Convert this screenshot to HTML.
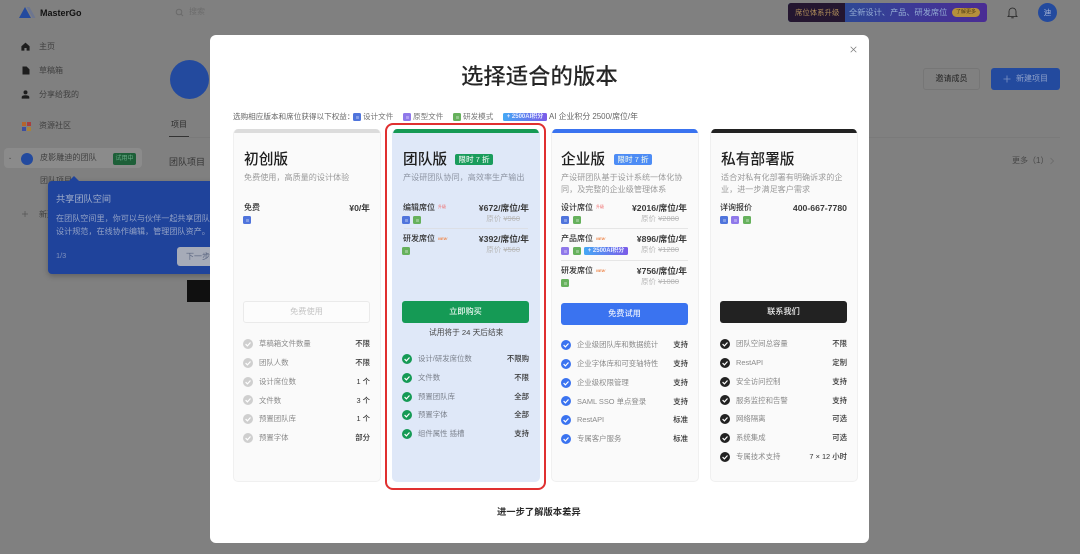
<!DOCTYPE html>
<html lang="zh-CN"><head><meta charset="utf-8"><title>MasterGo</title>
<style>
*{box-sizing:border-box;margin:0;padding:0}
html,body{width:1080px;height:554px;overflow:hidden;background:#808080}
body{position:relative;font-family:"Liberation Sans","Noto Sans CJK SC",sans-serif}
#bgfill{position:absolute;left:0;top:0;width:1080px;height:554px;background:#808080}
.a{position:absolute}
.t{position:absolute;white-space:nowrap;line-height:12px;height:12px;font-size:8px}
.r{text-align:right}
.b{font-weight:700}
.i{position:absolute;width:8px;height:8px;border-radius:1.5px}
.d{background:#4f74dc}.p{background:#8f78ea}.g{background:#66b15c}
.i:after{content:"";position:absolute;left:2.5px;top:2.5px;width:3px;height:3px;background:rgba(255,255,255,.3);border-radius:.5px}
.bd{position:absolute;height:8px;border-radius:1.5px;background:linear-gradient(90deg,#45a8f5,#7b5be8);color:#e8ecff;font-size:6px;line-height:8px;font-weight:700;text-align:center;white-space:nowrap;overflow:hidden}
.card{position:absolute;top:129px;width:148px;height:353px;background:#fafafa;border:1px solid #f0f0f0;border-top:0;border-radius:5px;overflow:hidden}
.card:before{content:"";position:absolute;left:-1px;right:-1px;top:0;height:4px;background:var(--c)}
.h{position:absolute;font-size:14.7px;line-height:18px;height:18px;font-weight:500;color:#1e1e1e;white-space:nowrap;top:151px}
.s{color:#9a9a9a;font-size:8.1px}
.lab{font-weight:500;color:#303030;font-size:8px}
.pr{font-weight:700;color:#3a3a3a;font-size:8.7px;text-align:right}
.og{color:#b8b8b8;font-size:7.5px;text-align:right}
.og s{text-decoration:line-through}
.hr{position:absolute;height:1px;background:#dcdfe6}
.up{position:absolute;font-size:4px;line-height:5px;color:#ef6a6a;white-space:nowrap}
.nw{position:absolute;font-size:4px;line-height:5px;color:#ef8a50;font-style:italic;font-weight:700;white-space:nowrap}
.btn{position:absolute;border-radius:3px;text-align:center;font-size:8.2px;font-weight:500;line-height:22px;height:22px;width:127px}
.f{color:#8a8a8a;font-size:7.4px}
.v{color:#333;font-weight:500;font-size:7.4px;text-align:right}
.ck{position:absolute;width:10px;height:10px}
.tag{position:absolute;top:154px;height:11px;width:38px;border-radius:2px;color:#e8f3ee;font-size:7.6px;line-height:11px;text-align:center;font-weight:500;white-space:nowrap}
.bg{color:#2c2c2c;font-size:8px}
.bg2{color:#3f3f3f;font-size:8px}
</style></head><body>
<div id="bgfill"></div>
<svg width="0" height="0" style="position:absolute"><defs>
<symbol id="c" viewBox="0 0 10 10"><circle cx="5" cy="5" r="5" fill="currentColor"/><path d="M2.6 5.1 4.4 6.9 7.5 3.5" fill="none" stroke="#fff" stroke-width="1.2"/></symbol>
</defs></svg>

<!-- dimmed app -->
<svg class="a" style="left:18px;top:6px" width="20" height="13" viewBox="0 0 20 13"><path d="M1 12 7 1 13 12Z" fill="#234a9e"/><path d="M8.5 1h3l6 11h-3Z" fill="#6d7690"/></svg>
<div class="t b" style="left:40px;top:7px;font-size:9px;color:#111">MasterGo</div>
<svg class="a" style="left:175px;top:8px" width="9" height="9" viewBox="0 0 9 9"><circle cx="4" cy="4" r="2.8" fill="none" stroke="#6a6a6a"/><path d="M6 6l2 2" stroke="#6a6a6a"/></svg>
<div class="t" style="left:189px;top:6px;color:#6c6c6c">搜索</div>

<div class="a" style="left:788px;top:3px;width:199px;height:19px;border-radius:3px;background:linear-gradient(90deg,#205493,#3b3a96 60%,#4a2c94);overflow:hidden"><div class="a" style="left:0;top:0;width:57px;height:19px;background:#241630"></div></div>
<div class="t" style="left:795px;top:6.5px;color:#b08e5a;font-size:7.4px">席位体系升级</div>
<div class="t" style="left:849px;top:6.5px;color:#93abd3;font-size:8.2px">全新设计、产品、研发席位</div>
<div class="a" style="left:952px;top:8px;width:28px;height:9px;border-radius:5px;background:#b5903c;color:#4c3a14;font-size:5px;line-height:9px;text-align:center;white-space:nowrap">了解更多</div>
<svg class="a" style="left:1007px;top:6px" width="11" height="13" viewBox="0 0 11 13"><path d="M2 9.5V5.5a3.5 3.5 0 0 1 7 0v4l1 1H1Z M4.3 11.8h2.4" fill="none" stroke="#222" stroke-width=".8"/></svg>
<div class="a" style="left:1038px;top:3px;width:19px;height:19px;border-radius:50%;background:#234a9e;color:#a9b6d6;font-size:7.5px;line-height:19px;text-align:center">迪</div>

<svg class="a" style="left:21px;top:42px" width="9" height="9" viewBox="0 0 9 9"><path d="M4.5.6 8.6 4.3V8.6H5.6V6H3.4V8.6H.4V4.3Z" fill="#1d1d1d"/></svg>
<div class="t bg2" style="left:39px;top:41px">主页</div>
<svg class="a" style="left:22px;top:66px" width="8" height="9" viewBox="0 0 8 9"><path d="M.5.5H4.6L7.5 3.4V8.5H.5Z" fill="#1d1d1d"/></svg>
<div class="t bg2" style="left:39px;top:65px">草稿箱</div>
<svg class="a" style="left:21px;top:90px" width="9" height="9" viewBox="0 0 9 9"><circle cx="4.5" cy="2.4" r="2" fill="#1d1d1d"/><path d="M.7 8.6V7C.7 5.7 2.6 5.2 4.5 5.2S8.3 5.7 8.3 7V8.6Z" fill="#1d1d1d"/></svg>
<div class="t bg2" style="left:39px;top:88.5px">分享给我的</div>
<div class="a" style="left:22px;top:122px;width:4px;height:4px;background:#b5652c"></div><div class="a" style="left:26.5px;top:122px;width:4px;height:4px;background:#a83f3f"></div><div class="a" style="left:22px;top:127px;width:4px;height:4px;background:#3d4fa0"></div><div class="a" style="left:26.5px;top:127px;width:4px;height:4px;background:#a8823c"></div>
<div class="t bg2" style="left:39px;top:120px">资源社区</div>
<div class="a" style="left:4px;top:148px;width:138px;height:20px;border-radius:4px;background:#8b8b8b"></div>
<div class="t" style="left:8px;top:152px;font-size:5px;color:#444">⌄</div>
<div class="a" style="left:21px;top:152.5px;width:12px;height:12px;border-radius:50%;background:#234a9e"></div>
<div class="t bg2" style="left:40px;top:152px;font-size:8.1px">皮影雕迪的团队</div>
<div class="a" style="left:113px;top:153px;width:23px;height:12px;border-radius:2px;background:#1d5f38;color:#6cae8a;font-size:6px;line-height:12px;text-align:center">试用中</div>
<div class="t bg2" style="left:40px;top:175px">团队项目</div>
<svg class="a" style="left:21px;top:210px" width="8" height="8" viewBox="0 0 8 8"><path d="M4 1v6M1 4h6" stroke="#555" stroke-width=".7"/></svg>
<div class="t bg2" style="left:39px;top:209px">新建</div>

<div class="a" style="left:48px;top:181px;width:170px;height:93px;border-radius:4px;background:#1f439b;box-shadow:0 2px 6px rgba(0,0,0,.25)"></div>
<div class="a" style="left:68px;top:176px;border-left:6px solid transparent;border-right:6px solid transparent;border-bottom:6px solid #1f439b"></div>
<div class="t" style="left:56px;top:193px;font-size:9.2px;color:#a0adca">共享团队空间</div>
<div class="t" style="left:56px;top:213px;font-size:8.1px;color:#93a2c6">在团队空间里，你可以与伙伴一起共享团队</div>
<div class="t" style="left:56px;top:225.5px;font-size:8.1px;color:#93a2c6">设计规范，在线协作编辑，管理团队资产。</div>
<div class="t" style="left:56px;top:250px;font-size:7.4px;color:#8092bd">1/3</div>
<div class="a" style="left:177px;top:247px;width:40px;height:19px;border-radius:3px;background:#a6abb8"></div>
<div class="t" style="left:186px;top:250.5px;color:#5a6580">下一步</div>
<div class="a" style="left:187px;top:280px;width:30px;height:22px;background:#101010"></div>

<div class="a" style="left:169.5px;top:59.5px;width:39px;height:39px;border-radius:50%;background:#234a9e"></div>
<div class="t bg" style="left:171px;top:119px">项目</div>
<div class="a" style="left:169px;top:136px;width:20px;height:1px;background:#333"></div>
<div class="a" style="left:189px;top:137px;width:871px;height:1px;background:#7a7a7a"></div>
<div class="t" style="left:169px;top:156px;font-size:9px;color:#333">团队项目</div>
<div class="a" style="left:923px;top:68px;width:57px;height:22px;border:1px solid #767676;border-radius:3px;color:#222;font-size:8px;line-height:20px;text-align:center">邀请成员</div>
<div class="a" style="left:991px;top:68px;width:69px;height:22px;border-radius:3px;background:#234a9e"></div>
<svg class="a" style="left:1003px;top:75px" width="8" height="8" viewBox="0 0 8 8"><path d="M4 .5v7M.5 4h7" stroke="#7e93c4" stroke-width=".8"/></svg>
<div class="t" style="left:1016px;top:73px;color:#8ea0c9">新建项目</div>
<div class="t" style="left:1012px;top:155px;color:#474747">更多（1）</div>
<svg class="a" style="left:1049px;top:157px" width="6" height="8" viewBox="0 0 6 8"><path d="M1.5 1 4.5 4 1.5 7" fill="none" stroke="#6a6a6a" stroke-width=".8"/></svg>

<!-- modal -->
<div class="a" style="left:210px;top:35px;width:659px;height:508px;border-radius:6px;background:#fff"></div>
<svg class="a" style="left:850px;top:46px" width="7" height="7" viewBox="0 0 7 7"><path d="M.7.7l5.6 5.6M6.3.7.7 6.3" stroke="#777" stroke-width=".7"/></svg>
<div class="t" style="left:461px;top:63px;height:28px;line-height:28px;font-size:22.4px;font-weight:500;color:#262626">选择适合的版本</div>

<div class="t" style="left:233px;top:111px;font-size:7.6px;color:#666">选购相应版本和席位获得以下权益：</div>
<div class="i d" style="left:353px;top:113px"></div><div class="t" style="left:363px;top:111px;font-size:7.6px;color:#777">设计文件</div>
<div class="i p" style="left:403px;top:113px"></div><div class="t" style="left:413px;top:111px;font-size:7.6px;color:#777">原型文件</div>
<div class="i g" style="left:453px;top:113px"></div><div class="t" style="left:463px;top:111px;font-size:7.6px;color:#777">研发模式</div>
<div class="bd" style="left:503px;top:113px;width:44px">+ 2500AI积分</div>
<div class="t" style="left:549px;top:111px;font-size:7.9px;color:#666">AI 企业积分 2500/席位/年</div>

<div class="card" style="left:233px;--c:#dcdcdc"></div>
<div class="card" style="left:392px;--c:#159a55;background:#dfe8f8;border-color:#dfe8f8"></div>
<div class="card" style="left:551px;--c:#3a73f0"></div>
<div class="card" style="left:710px;--c:#222"></div>

<!-- card 1 -->
<div class="h" style="left:244px">初创版</div>
<div class="t s" style="left:244px;top:171.5px">免费使用，高质量的设计体验</div>
<div class="t lab" style="left:244px;top:202px">免费</div>
<div class="t pr" style="right:710px;top:202px">¥0/年</div>
<div class="i d" style="left:243px;top:216px"></div>
<div class="btn" style="left:243px;top:301px;background:#fcfcfc;border:1px solid #eaeaea;color:#c4c4c4;line-height:20px;font-weight:400">免费使用</div>
<svg class="ck" style="left:243px;top:339px;color:#cfcfcf"><use href="#c"/></svg><div class="t f" style="left:259px;top:338px">草稿箱文件数量</div><div class="t v" style="right:710px;top:338px">不限</div>
<svg class="ck" style="left:243px;top:358px;color:#cfcfcf"><use href="#c"/></svg><div class="t f" style="left:259px;top:357px">团队人数</div><div class="t v" style="right:710px;top:357px">不限</div>
<svg class="ck" style="left:243px;top:377px;color:#cfcfcf"><use href="#c"/></svg><div class="t f" style="left:259px;top:376px">设计席位数</div><div class="t v" style="right:710px;top:376px">1 个</div>
<svg class="ck" style="left:243px;top:395px;color:#cfcfcf"><use href="#c"/></svg><div class="t f" style="left:259px;top:394.5px">文件数</div><div class="t v" style="right:710px;top:394.5px">3 个</div>
<svg class="ck" style="left:243px;top:414px;color:#cfcfcf"><use href="#c"/></svg><div class="t f" style="left:259px;top:413px">预置团队库</div><div class="t v" style="right:710px;top:413px">1 个</div>
<svg class="ck" style="left:243px;top:433px;color:#cfcfcf"><use href="#c"/></svg><div class="t f" style="left:259px;top:432px">预置字体</div><div class="t v" style="right:710px;top:432px">部分</div>

<!-- card 2 -->
<div class="h" style="left:403px">团队版</div>
<div class="tag" style="left:455px;background:#1a9c5c">限时 7 折</div>
<div class="t s" style="left:403px;top:171.5px;color:#8e95a3">产设研团队协同，高效率生产输出</div>
<div class="t lab" style="left:403px;top:202px">编辑席位</div><div class="up" style="left:438px;top:204px">升级</div>
<div class="t pr" style="right:551px;top:202px">¥672/席位/年</div>
<div class="t og" style="right:560px;top:212.5px">原价 <s>¥960</s></div>
<div class="i d" style="left:402px;top:216px"></div><div class="i g" style="left:413px;top:216px"></div>
<div class="hr" style="left:404px;top:228px;width:124px"></div>
<div class="t lab" style="left:403px;top:233px">研发席位</div><div class="nw" style="left:438px;top:236px">NEW</div>
<div class="t pr" style="right:551px;top:233px">¥392/席位/年</div>
<div class="t og" style="right:560px;top:244px">原价 <s>¥560</s></div>
<div class="i g" style="left:402px;top:247px"></div>
<div class="btn" style="left:402px;top:301px;background:#159a55;color:#e8f7ef">立即购买</div>
<div class="t" style="left:429px;top:327px;color:#444;font-size:7.7px">试用将于 24 天后结束</div>
<svg class="ck" style="left:402px;top:354px;color:#159a55"><use href="#c"/></svg><div class="t f" style="left:418px;top:353px;color:#7c828d">设计/研发席位数</div><div class="t v" style="right:551px;top:353px">不限购</div>
<svg class="ck" style="left:402px;top:373px;color:#159a55"><use href="#c"/></svg><div class="t f" style="left:418px;top:372px;color:#7c828d">文件数</div><div class="t v" style="right:551px;top:372px">不限</div>
<svg class="ck" style="left:402px;top:392px;color:#159a55"><use href="#c"/></svg><div class="t f" style="left:418px;top:391px;color:#7c828d">预置团队库</div><div class="t v" style="right:551px;top:391px">全部</div>
<svg class="ck" style="left:402px;top:410px;color:#159a55"><use href="#c"/></svg><div class="t f" style="left:418px;top:409px;color:#7c828d">预置字体</div><div class="t v" style="right:551px;top:409px">全部</div>
<svg class="ck" style="left:402px;top:429px;color:#159a55"><use href="#c"/></svg><div class="t f" style="left:418px;top:428px;color:#7c828d">组件属性 插槽</div><div class="t v" style="right:551px;top:428px">支持</div>

<!-- card 3 -->
<div class="h" style="left:561px">企业版</div>
<div class="tag" style="left:614px;background:#4d8cf5">限时 7 折</div>
<div class="t s" style="left:561px;top:172px">产设研团队基于设计系统一体化协</div>
<div class="t s" style="left:561px;top:183.5px">同，及完整的企业级管理体系</div>
<div class="t lab" style="left:561px;top:202px">设计席位</div><div class="up" style="left:596px;top:204px">升级</div>
<div class="t pr" style="right:393px;top:202px">¥2016/席位/年</div>
<div class="t og" style="right:401px;top:212.5px">原价 <s>¥2880</s></div>
<div class="i d" style="left:561px;top:216px"></div><div class="i g" style="left:573px;top:216px"></div>
<div class="hr" style="left:561px;top:228px;width:127px;background:#e6e6e6"></div>
<div class="t lab" style="left:561px;top:233px">产品席位</div><div class="nw" style="left:596px;top:236px">NEW</div>
<div class="t pr" style="right:393px;top:233px">¥896/席位/年</div>
<div class="t og" style="right:401px;top:244px">原价 <s>¥1280</s></div>
<div class="i p" style="left:561px;top:247px"></div><div class="i g" style="left:573px;top:247px"></div><div class="bd" style="left:584px;top:247px;width:44px">+ 2500AI积分</div>
<div class="hr" style="left:561px;top:260px;width:127px;background:#e6e6e6"></div>
<div class="t lab" style="left:561px;top:265px">研发席位</div><div class="nw" style="left:596px;top:268px">NEW</div>
<div class="t pr" style="right:393px;top:265px">¥756/席位/年</div>
<div class="t og" style="right:401px;top:276px">原价 <s>¥1080</s></div>
<div class="i g" style="left:561px;top:279px"></div>
<div class="btn" style="left:561px;top:302.5px;background:#3a73f0;color:#e8effd">免费试用</div>
<svg class="ck" style="left:561px;top:340px;color:#3a73f0"><use href="#c"/></svg><div class="t f" style="left:577px;top:339px">企业级团队库和数据统计</div><div class="t v" style="right:392px;top:339px">支持</div>
<svg class="ck" style="left:561px;top:359px;color:#3a73f0"><use href="#c"/></svg><div class="t f" style="left:577px;top:358px">企业字体库和可变轴特性</div><div class="t v" style="right:392px;top:358px">支持</div>
<svg class="ck" style="left:561px;top:378px;color:#3a73f0"><use href="#c"/></svg><div class="t f" style="left:577px;top:377px">企业级权限管理</div><div class="t v" style="right:392px;top:377px">支持</div>
<svg class="ck" style="left:561px;top:396px;color:#3a73f0"><use href="#c"/></svg><div class="t f" style="left:577px;top:395.5px">SAML SSO 单点登录</div><div class="t v" style="right:392px;top:395.5px">支持</div>
<svg class="ck" style="left:561px;top:415px;color:#3a73f0"><use href="#c"/></svg><div class="t f" style="left:577px;top:414px">RestAPI</div><div class="t v" style="right:392px;top:414px">标准</div>
<svg class="ck" style="left:561px;top:434px;color:#3a73f0"><use href="#c"/></svg><div class="t f" style="left:577px;top:433px">专属客户服务</div><div class="t v" style="right:392px;top:433px">标准</div>

<!-- card 4 -->
<div class="h" style="left:721px">私有部署版</div>
<div class="t s" style="left:721px;top:172px">适合对私有化部署有明确诉求的企</div>
<div class="t s" style="left:721px;top:183.5px">业，进一步满足客户需求</div>
<div class="t lab" style="left:720px;top:202px">详询报价</div>
<div class="t pr" style="right:233px;top:202px">400-667-7780</div>
<div class="i d" style="left:720px;top:216px"></div><div class="i p" style="left:731px;top:216px"></div><div class="i g" style="left:743px;top:216px"></div>
<div class="btn" style="left:720px;top:301px;background:#222;color:#eee">联系我们</div>
<svg class="ck" style="left:720px;top:339px;color:#222"><use href="#c"/></svg><div class="t f" style="left:736px;top:338px">团队空间总容量</div><div class="t v" style="right:233px;top:338px">不限</div>
<svg class="ck" style="left:720px;top:358px;color:#222"><use href="#c"/></svg><div class="t f" style="left:736px;top:357px">RestAPI</div><div class="t v" style="right:233px;top:357px">定制</div>
<svg class="ck" style="left:720px;top:377px;color:#222"><use href="#c"/></svg><div class="t f" style="left:736px;top:376px">安全访问控制</div><div class="t v" style="right:233px;top:376px">支持</div>
<svg class="ck" style="left:720px;top:395px;color:#222"><use href="#c"/></svg><div class="t f" style="left:736px;top:394.5px">服务监控和告警</div><div class="t v" style="right:233px;top:394.5px">支持</div>
<svg class="ck" style="left:720px;top:414px;color:#222"><use href="#c"/></svg><div class="t f" style="left:736px;top:413px">网络隔离</div><div class="t v" style="right:233px;top:413px">可选</div>
<svg class="ck" style="left:720px;top:433px;color:#222"><use href="#c"/></svg><div class="t f" style="left:736px;top:432px">系统集成</div><div class="t v" style="right:233px;top:432px">可选</div>
<svg class="ck" style="left:720px;top:452px;color:#222"><use href="#c"/></svg><div class="t f" style="left:736px;top:451px">专属技术支持</div><div class="t v" style="right:233px;top:451px">7 × 12 小时</div>

<div class="a" style="left:385px;top:123px;width:161px;height:367px;border:2px solid #e03030;border-radius:8px"></div>
<div class="t b" style="left:497px;top:506px;font-size:9.3px;color:#2a2a2a">进一步了解版本差异</div>
</body></html>
